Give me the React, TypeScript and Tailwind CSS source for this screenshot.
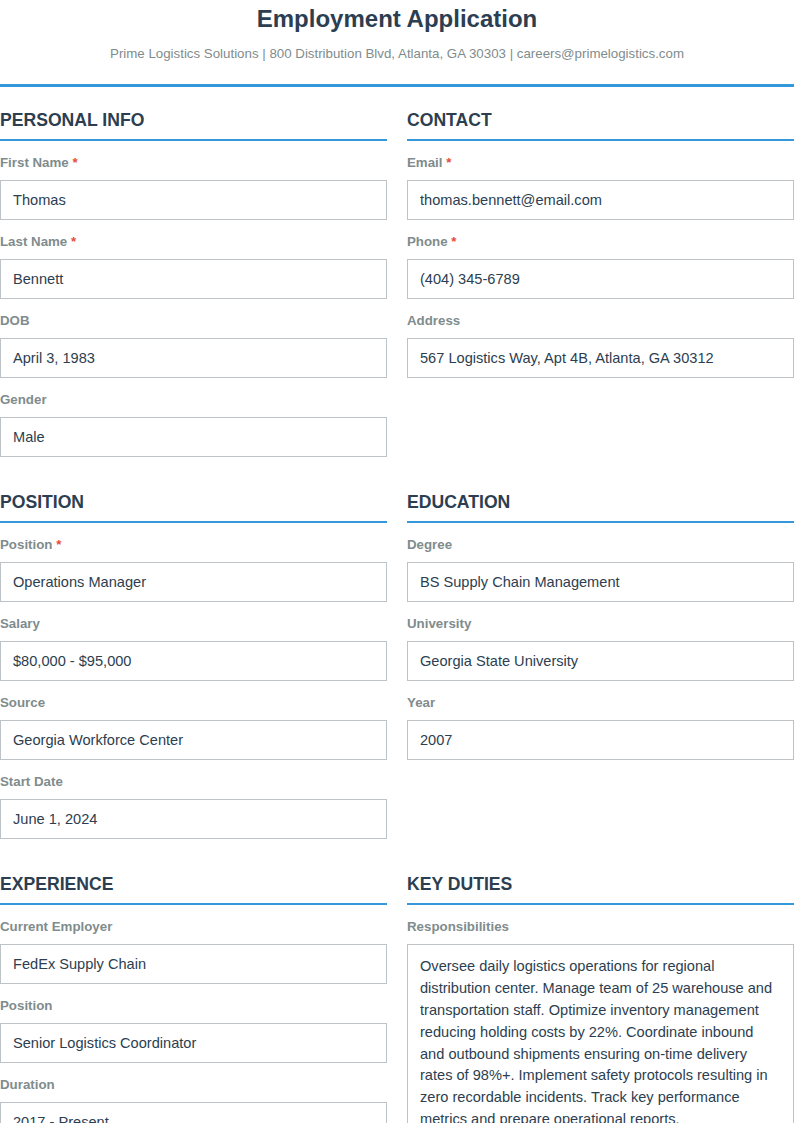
import React from 'react';

type Field = { label: string; value: string; required?: boolean; multiline?: boolean };
type Section = { title: string; fields: Field[] };

const sections: Section[] = [
  {
    title: 'Personal Info',
    fields: [
      { label: 'First Name', value: 'Thomas', required: true },
      { label: 'Last Name', value: 'Bennett', required: true },
      { label: 'DOB', value: 'April 3, 1983' },
      { label: 'Gender', value: 'Male' },
    ],
  },
  {
    title: 'Contact',
    fields: [
      { label: 'Email', value: 'thomas.bennett@email.com', required: true },
      { label: 'Phone', value: '(404) 345-6789', required: true },
      { label: 'Address', value: '567 Logistics Way, Apt 4B, Atlanta, GA 30312' },
    ],
  },
  {
    title: 'Position',
    fields: [
      { label: 'Position', value: 'Operations Manager', required: true },
      { label: 'Salary', value: '$80,000 - $95,000' },
      { label: 'Source', value: 'Georgia Workforce Center' },
      { label: 'Start Date', value: 'June 1, 2024' },
    ],
  },
  {
    title: 'Education',
    fields: [
      { label: 'Degree', value: 'BS Supply Chain Management' },
      { label: 'University', value: 'Georgia State University' },
      { label: 'Year', value: '2007' },
    ],
  },
  {
    title: 'Experience',
    fields: [
      { label: 'Current Employer', value: 'FedEx Supply Chain' },
      { label: 'Position', value: 'Senior Logistics Coordinator' },
      { label: 'Duration', value: '2017 - Present' },
    ],
  },
  {
    title: 'Key Duties',
    fields: [
      {
        label: 'Responsibilities',
        multiline: true,
        value:
          'Oversee daily logistics operations for regional distribution center. Manage team of 25 warehouse and transportation staff. Optimize inventory management reducing holding costs by 22%. Coordinate inbound and outbound shipments ensuring on-time delivery rates of 98%+. Implement safety protocols resulting in zero recordable incidents. Track key performance metrics and prepare operational reports.',
      },
    ],
  },
];

const FormField = ({ field }: { field: Field }) => (
  <div className="mb-[14px]">
    <div className="text-[13.3px] leading-[16px] font-bold text-[#7f8c8d] mb-[9px]">
      {field.label}
      {field.required && <span className="text-[#e74c3c]"> *</span>}
    </div>
    {field.multiline ? (
      <div className="border border-[#bdc3c7] px-[12px] pt-[11px] pb-[12px] min-h-[200px] text-[14.6px] leading-[1.5] text-[#2c3e50]">
        {field.value}
      </div>
    ) : (
      <div className="h-[40px] border border-[#bdc3c7] px-[12px] flex items-center text-[14.6px] leading-[18px] text-[#2c3e50]">
        {field.value}
      </div>
    )}
  </div>
);

export default function App() {
  return (
    <div className="w-[794px] min-h-[1123px] bg-white font-['Liberation_Sans',Arial,Helvetica,sans-serif]">
      {/* Header */}
      <header className="text-center pt-[4px] pb-[22px] border-b-[3px] border-[#3498db]">
        <h1 className="text-[24px] leading-[29px] font-bold text-[#2c3e50]">Employment Application</h1>
        <p className="mt-[13px] text-[13.3px] leading-[16px] text-[#7f8c8d]">
          Prime Logistics Solutions | 800 Distribution Blvd, Atlanta, GA 30303 | careers@primelogistics.com
        </p>
      </header>

      {/* Sections */}
      <main className="grid grid-cols-2 gap-x-[20px] gap-y-[20px] pt-[22px]">
        {sections.map((s) => (
          <section key={s.title}>
            <h2 className="text-[17.6px] leading-[22px] font-bold uppercase text-[#2c3e50] pb-[8px] border-b-2 border-[#3498db] mb-[14px]">
              {s.title}
            </h2>
            {s.fields.map((f) => (
              <FormField key={f.label} field={f} />
            ))}
          </section>
        ))}
      </main>
    </div>
  );
}
